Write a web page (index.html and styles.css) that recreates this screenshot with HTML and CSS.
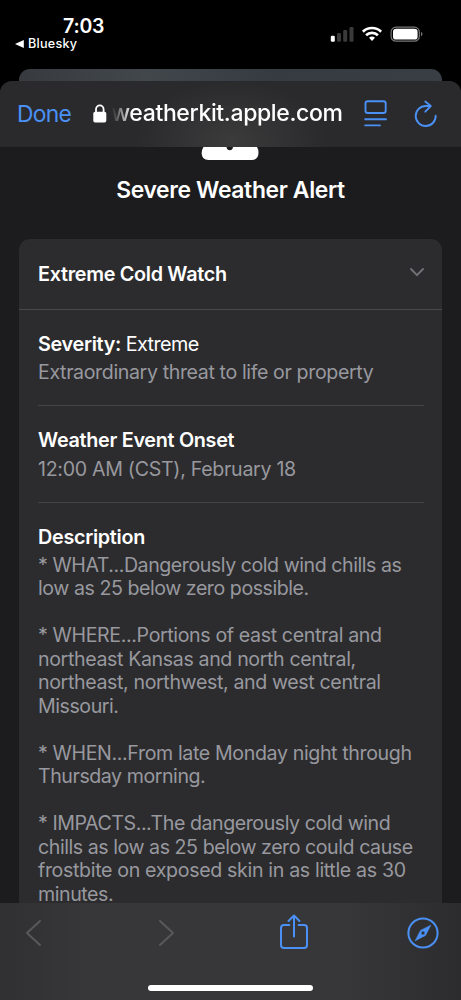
FILE: index.html
```html
<!DOCTYPE html>
<html lang="en">
<head>
<meta charset="utf-8">
<title>Severe Weather Alert</title>
<link rel="stylesheet" href="styles.css">
</head>
<body>
<div class="phone">
  <div class="status">
    <div class="status-left">
      <div class="time">7:03</div>
      <div class="back"><svg width="9" height="8" viewBox="0 0 9 8"><path d="M0 4 8.8 0V8Z" fill="#fff"/></svg><span>Bluesky</span></div>
    </div>
    <svg class="status-icons" width="94" height="18" viewBox="0 0 94 18">
      <g fill="#fff"><rect x="0.8" y="10.8" width="4" height="6" rx="1.2"/>
      <g fill="#3a3a3a"><rect x="7" y="8" width="4" height="8.8" rx="1.2"/><rect x="13.2" y="5" width="4" height="11.8" rx="1.2"/><rect x="19.5" y="2" width="4" height="14.8" rx="1.2"/></g></g>
      <g fill="none" stroke="#fff" stroke-width="2.7"><path d="M32.9 6.7a13 13 0 0 1 18.2 0"/><path d="M36.1 10.2a8.4 8.4 0 0 1 11.8 0"/></g>
      <path d="M39 12.8a4.4 4.4 0 0 1 6 0L42 16Z" fill="#fff"/>
      <rect x="61.1" y="2.2" width="28.2" height="14" rx="4.8" fill="none" stroke="#777" stroke-width="1.2"/>
      <rect x="63" y="3.8" width="24.6" height="10.8" rx="3.2" fill="#fff"/>
      <path d="M91 7q1.5.6 1.5 2.1t-1.5 2.1Z" fill="#777"/>
    </svg>
  </div>
  <div class="behind"></div>
  <div class="sheet">
    <header class="bar">
      <span class="done">Done</span>
      <svg class="lock" width="14" height="19" viewBox="0 0 14 19"><rect x="0.3" y="7.8" width="13" height="10.7" rx="1.8" fill="#fff"/><path d="M3 9V5.4a3.8 4.1 0 0 1 7.6 0V9" fill="none" stroke="#fff" stroke-width="1.8"/></svg>
      <span class="url">weatherkit.apple.com</span>
      <svg class="reader" width="24" height="28" viewBox="0 0 24 28" fill="none" stroke="#4a90f5" stroke-width="1.9" stroke-linecap="round"><rect x="1.5" y="1.2" width="20.2" height="11.8" rx="2.3"/><path d="M1.2 19.2H22M1.2 25.4H16"/></svg>
      <svg class="reload" width="24" height="28" viewBox="0 0 24 28" fill="none" stroke="#4a90f5" stroke-width="1.9" stroke-linecap="round" stroke-linejoin="round"><path d="M21.7 15.8A10 10 0 1 1 11.8 6H16.5M11.3 1.5 16.8 6 11.3 11.7"/></svg>
    </header>
    <main class="page">
      <svg class="alert-icon" width="58" height="13" viewBox="0 0 58 13"><path d="M2.5 0H56Q57.5 2.5 57.5 5.5Q57.5 13 50.5 13H7.5Q.7 13 .7 6.3Q.7 2.5 2.5 0Z" fill="#fff"/><path d="M25.5 0H32Q31.5 3.3 28.8 3.3T25.5 0Z" fill="#1c1c1e"/></svg>
      <h1>Severe Weather Alert</h1>
      <section class="card">
        <div class="card-head"><h2>Extreme Cold Watch</h2><svg width="14" height="9" viewBox="0 0 14 9"><path d="M1 1 7 7.2 13 1" fill="none" stroke="#727276" stroke-width="1.9" stroke-linecap="round" stroke-linejoin="round"/></svg></div>
        <div class="rows">
          <div class="row"><h3>Severity: <span>Extreme</span></h3><p class="threat">Extraordinary threat to life or property</p></div>
          <div class="row"><h3>Weather Event Onset</h3><p class="date">12:00 AM (CST), February 18</p></div>
          <div class="row last"><h3>Description</h3>
            <p>* WHAT...Dangerously cold wind chills as<br>low as 25 below zero possible.<br><br><span class="loose">* WHERE...Portions of east central and<br>northeast Kansas and north central,<br>northeast, northwest, and west central</span><br>Missouri.<br><br><span class="loose">* WHEN...From late Monday night through</span><br>Thursday morning.<br><br>* IMPACTS...The dangerously cold wind<br>chills as low as 25 below zero could cause<br><span class="looser">frostbite on exposed skin in as little as 30</span><br>minutes.</p>
          </div>
        </div>
      </section>
    </main>
    <footer class="tools">
      <div class="tool-row">
        <svg width="17" height="28" viewBox="0 0 17 28"><path d="M15 2 2 14 15 26" fill="none" stroke="#59595b" stroke-width="2" stroke-linecap="round" stroke-linejoin="round"/></svg>
        <svg class="forward" width="17" height="28" viewBox="0 0 17 28"><path d="M2 2 15 14 2 26" fill="none" stroke="#59595b" stroke-width="2" stroke-linecap="round" stroke-linejoin="round"/></svg>
        <svg class="share" width="30" height="36" viewBox="0 0 30 36" fill="none" stroke="#4a90f5" stroke-width="2" stroke-linecap="round" stroke-linejoin="round"><path d="M10.3 11H5Q2 11 2 14V31Q2 34 5 34H25Q28 34 28 31V14Q28 11 25 11H19.7M15 22.5V1.5M9.5 7 15 1.5 20.5 7"/></svg>
        <svg class="compass" width="32" height="32" viewBox="0 0 32 32"><circle cx="16" cy="16" r="14.6" fill="none" stroke="#4a90f5" stroke-width="2"/><path fill-rule="evenodd" d="M23.8 8.2 18.5 18.4 8.2 23.8 13.5 13.4ZM16 14.1a1.9 1.9 0 1 0 0 3.8 1.9 1.9 0 0 0 0-3.8Z" fill="#4a90f5" stroke="#4a90f5" stroke-width=".6" stroke-linejoin="round"/></svg>
      </div>
      <div class="home"></div>
    </footer>
  </div>
</div>
</body>
</html>
```
FILE: styles.css
```css
* { box-sizing: border-box; }
body { margin: 0; background: #000; color: #fff; font-family: Inter, "Liberation Sans", sans-serif; }
h1, h2, h3, p { margin: 0; }
svg { display: block; flex: none; }
.phone { width: 461px; height: 1000px; display: flex; flex-direction: column; overflow: hidden; }
.status { height: 69px; flex: none; display: flex; justify-content: space-between; padding: 14px 37px 0 15px; }
.time { font-size: 19.5px; font-weight: 600; line-height: 24px; padding-left: 48px; letter-spacing: -0.2px; }
.back { display: flex; align-items: center; gap: 4px; font-size: 12.6px; font-weight: 450; line-height: 12px; letter-spacing: 0.25px; }
.status-icons { margin-top: 11px; }
.behind { height: 12px; flex: none; margin: 0 19px; border-radius: 11px 11px 0 0; background: linear-gradient(90deg, #373b40, #42474c 30%, #353b41 60%, #383e44); }
.sheet { flex: 1; min-height: 0; display: flex; flex-direction: column; border-radius: 12px 12px 0 0; overflow: hidden; background: #1c1c1e; }
.bar { height: 66px; flex: none; display: flex; align-items: center; padding-left: 17px; background: radial-gradient(ellipse 95px 60px at 231px 60px, #3b3b3c, #2a2a2c); }
.done { width: 76px; font-size: 22.8px; color: #4a90f5; letter-spacing: -0.7px; margin-top: -1px; }
.lock { margin-top: -2px; }
.url { width: 235px; margin: -2px 0 0 4px; font-size: 23px; font-weight: 550; letter-spacing: -0.36px; white-space: nowrap; -webkit-mask-image: linear-gradient(90deg, transparent 1px, #000 21px); mask-image: linear-gradient(90deg, transparent 1px, #000 21px); }
.reader { margin-left: 18px; }
.reload { margin-left: 26px; }
.page { flex: 1; min-height: 0; overflow: hidden; display: flex; flex-direction: column; }
.alert-icon { margin-left: 201px; }
h1 { margin-top: 16px; font-size: 22.9px; line-height: 28px; font-weight: 600; text-align: center; letter-spacing: -0.36px; }
.card { margin: 35px 19px 0; border-radius: 11px 11px 0 0; background: #2c2c2e; flex: none; }
.card-head { height: 71px; padding: 0 18px 0 19px; display: flex; align-items: center; justify-content: space-between; border-bottom: 1px solid #48484a; }
.card-head svg { margin-bottom: 4px; }
h2, h3 { font-size: 19.8px; line-height: 24px; font-weight: 600; letter-spacing: -0.3px; white-space: nowrap; }
h3 span { font-weight: 400; letter-spacing: -0.6px; }
.rows { padding: 0 18px 0 19px; }
.row { height: 96px; padding-top: 22px; border-bottom: 1px solid #444447; }
.row + .row { height: 97px; }
.row.last { height: 420px; border: 0; }
p { margin-top: 5px; font-size: 19.6px; line-height: 23.48px; color: #98989f; letter-spacing: -0.45px; white-space: nowrap; }
.threat { letter-spacing: -0.38px; }
.date { margin-top: 6px; letter-spacing: -0.3px; }
.loose { letter-spacing: -0.37px; }
.looser { letter-spacing: -0.34px; }
.tools { height: 97px; flex: none; background: linear-gradient(90deg, #303032, #373739 18%, #373739 75%, #2c2c2e); }
.tool-row { height: 59px; display: flex; align-items: center; padding: 0 22px 0 25px; }
.forward { margin-left: 116px; }
.share { margin: -2px 0 0 104px; }
.compass { margin-left: auto; }
.home { width: 165px; height: 6px; margin: 23px auto 0; border-radius: 3px; background: #fff; }
```
